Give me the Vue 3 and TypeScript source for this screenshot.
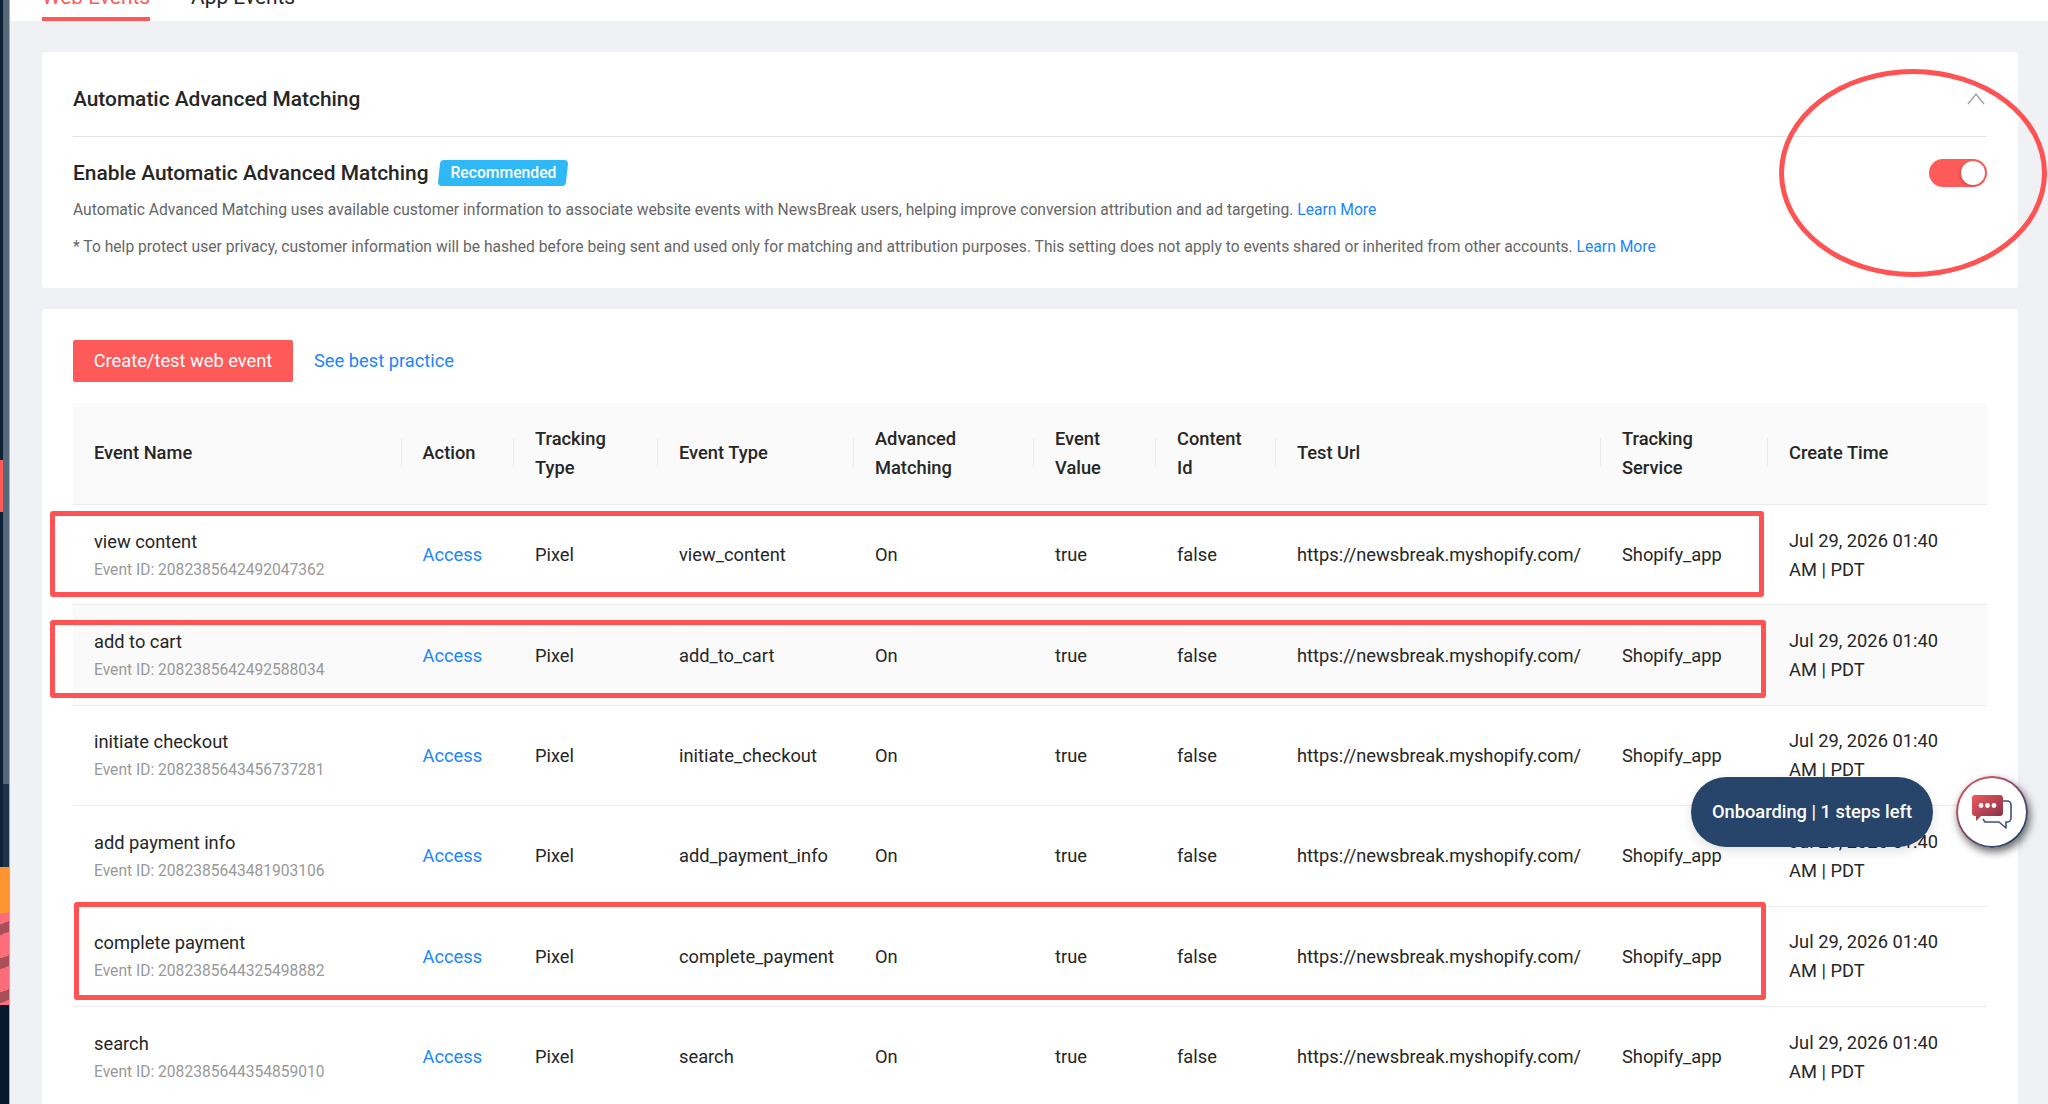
<script setup lang="ts">
interface EventRow {
  name: string;
  id: string;
  type: string;
}

// Rows of the web events table
const rows: EventRow[] = [
  { name: 'view content', id: '2082385642492047362', type: 'view_content' },
  { name: 'add to cart', id: '2082385642492588034', type: 'add_to_cart' },
  { name: 'initiate checkout', id: '2082385643456737281', type: 'initiate_checkout' },
  { name: 'add payment info', id: '2082385643481903106', type: 'add_payment_info' },
  { name: 'complete payment', id: '2082385644325498882', type: 'complete_payment' },
  { name: 'search', id: '2082385644354859010', type: 'search' },
];

const columns = [328.5, 112.5, 144, 196, 180, 122, 120, 325, 167, 219];
</script>

<template>
  <div class="page">
    <aside class="rail">
      <div class="rail-top"></div>
      <div class="rail-art"></div>
      <div class="rail-bottom"></div>
    </aside>

    <main class="main">
      <nav class="tabs">
        <span class="tab active">Web Events</span>
        <span class="tab">App Events</span>
      </nav>

      <div class="content">
        <section class="card matching">
          <header class="matching-head">
            <h2>Automatic Advanced Matching</h2>
            <svg class="chevron" width="18" height="13" viewBox="0 0 18 13">
              <path d="M1 12 L9 2 L17 12" fill="none" stroke="#a0a0a0" stroke-width="1.4" />
            </svg>
          </header>
          <div class="enable-row">
            <h3>Enable Automatic Advanced Matching</h3>
            <span class="badge">Recommended</span>
            <span class="toggle"><i></i></span>
          </div>
          <p class="desc first">
            Automatic Advanced Matching uses available customer information to associate website events with NewsBreak users, helping improve conversion attribution and ad targeting.
            <a>Learn More</a>
          </p>
          <p class="desc">
            * To help protect user privacy, customer information will be hashed before being sent and used only for matching and attribution purposes. This setting does not apply to events shared or inherited from other accounts.
            <a>Learn More</a>
          </p>
        </section>

        <section class="card events">
          <div class="actions">
            <button class="create">Create/test web event</button>
            <a class="practice">See best practice</a>
          </div>
          <table>
            <colgroup>
              <col v-for="(w, i) in columns" :key="i" :style="{ width: w + 'px' }" />
            </colgroup>
            <thead>
              <tr>
                <th>Event Name</th>
                <th>Action</th>
                <th>Tracking<br />Type</th>
                <th>Event Type</th>
                <th>Advanced<br />Matching</th>
                <th>Event<br />Value</th>
                <th>Content<br />Id</th>
                <th>Test Url</th>
                <th>Tracking<br />Service</th>
                <th>Create Time</th>
              </tr>
            </thead>
            <tbody>
              <tr v-for="(row, i) in rows" :key="row.id" :class="{ hovered: i === 1 }">
                <td>
                  <div class="name">{{ row.name }}</div>
                  <div class="event-id">Event ID: {{ row.id }}</div>
                </td>
                <td><a class="access">Access</a></td>
                <td>Pixel</td>
                <td>{{ row.type }}</td>
                <td>On</td>
                <td>true</td>
                <td>false</td>
                <td>https://newsbreak.myshopify.com/</td>
                <td>Shopify_app</td>
                <td class="time">Jul 29, 2026 01:40 AM | PDT</td>
              </tr>
            </tbody>
          </table>
        </section>
      </div>
    </main>

    <!-- red marks drawn over the screenshot -->
    <div class="mark mark-one"></div>
    <div class="mark mark-two"></div>
    <div class="mark mark-three"></div>
    <div class="mark-ring"></div>

    <div class="onboarding">Onboarding | 1 steps left</div>
    <div class="chat">
      <div class="chat-inner">
        <svg width="42" height="36" viewBox="0 0 42 36">
          <defs>
            <linearGradient id="bubble" x1="0" y1="0" x2="1" y2="1">
              <stop offset="0" stop-color="#f2595c" />
              <stop offset="1" stop-color="#7a2f4a" />
            </linearGradient>
          </defs>
          <path d="M31 7 h5 a4 4 0 0 1 4 4 v13 a4 4 0 0 1 -4 4 h-1 v6 l-7 -6 h-14 l-2 -3" fill="none" stroke="#444e78" stroke-width="1.6" stroke-linejoin="round" />
          <path d="M4 1 h25 a3 3 0 0 1 3 3 v15 a3 3 0 0 1 -3 3 h-19 l-5 5 v-5 h-1 a3 3 0 0 1 -3 -3 v-15 a3 3 0 0 1 3 -3 z" fill="url(#bubble)" />
          <circle cx="10" cy="11.500" r="2.400" fill="#fff" />
          <circle cx="16.500" cy="11.500" r="2.400" fill="#fff" />
          <circle cx="23" cy="11.500" r="2.400" fill="#fff" />
        </svg>
      </div>
    </div>
  </div>
</template>

<style>
html,
body {
  margin: 0;
  overflow: hidden;
}
</style>

<style scoped>
.page {
  position: relative;
  display: flex;
  height: 1104px;
  overflow: hidden;
  font-family: Roboto, "Liberation Sans", sans-serif;
  font-size: 18.3px;
  color: #262626;
  background: #f0f1f5;
}

/* left edge of the app behind the page */
.rail {
  flex: none;
  width: 10px;
  display: flex;
  flex-direction: column;
  border-right: 1px solid #a9adb5;
  box-sizing: border-box;
}
.rail-top {
  height: 867px;
  background:
    linear-gradient(#55697a, #55697a) 3px 0 / 6px 784px no-repeat,
    linear-gradient(#1d3348, #1d3348) 3px 0 / 6px 867px no-repeat,
    linear-gradient(#ff5a5a, #ff5a5a) 0 460px / 3px 52px no-repeat,
    #0f2238;
}
.rail-art {
  height: 138px;
  background:
    linear-gradient(172deg, #ff9430 0, #ff9430 33%, transparent 34%),
    repeating-linear-gradient(160deg, #fb6d78 0, #fb6d78 22px, #a84f58 22px, #a84f58 32px);
}
.rail-bottom {
  flex: 1;
  background: #08182c;
}

.main {
  flex: 1;
  min-width: 0;
}

.tabs {
  display: flex;
  gap: 41px;
  height: 21px;
  padding-left: 32px;
  background: #fff;
  overflow: hidden;
  align-items: flex-end;
}
.tab {
  flex: none;
  font-size: 20.9px;
  line-height: 24px;
  padding-bottom: 12px;
}
.tab.active {
  color: #ff5a5a;
  border-bottom: 4px solid #ff5a5a;
  padding-bottom: 8px;
}

.content {
  padding: 31px 30px 0 32px;
}

.card {
  background: #fff;
  border-radius: 3px;
  padding: 0 31px;
}
.matching {
  height: 236px;
  box-sizing: border-box;
  margin-bottom: 21px;
}
.matching-head {
  display: flex;
  align-items: center;
  justify-content: space-between;
  height: 84.5px;
  padding-top: 10px;
  border-bottom: 1px solid #e3e3e3;
  box-sizing: border-box;
}
.matching-head h2 {
  margin: 0;
  font-size: 20.9px;
  font-weight: 500;
}
.chevron {
  margin: 0 2px 0 0;
}
.enable-row {
  display: flex;
  align-items: center;
  gap: 11px;
  height: 28px;
  margin-top: 22.500px;
}
.enable-row h3 {
  margin: 0;
  font-size: 20.9px;
  font-weight: 500;
}
.badge {
  position: relative;
  z-index: 0;
  padding: 0 11px;
  font-size: 15.7px;
  font-weight: 500;
  line-height: 26px;
  color: #fff;
}
.badge::before {
  content: "";
  position: absolute;
  inset: 0;
  z-index: -1;
  background: #2fb8f6;
  border-radius: 4px;
  transform: skewX(-6deg);
}
.toggle {
  display: flex;
  justify-content: flex-end;
  align-items: center;
  width: 58px;
  height: 28px;
  margin-left: auto;
  padding: 2px;
  box-sizing: border-box;
  background: #ff5a5a;
  border-radius: 14px;
}
.toggle i {
  width: 24px;
  height: 24px;
  background: #fff;
  border-radius: 50%;
  box-shadow: -1px 1px 3px rgba(0, 0, 0, 0.2);
}
.desc {
  margin: 0;
  font-size: 15.65px;
  line-height: 24px;
  color: #666;
  margin-top: 13px;
}
.desc.first {
  margin-top: 11px;
}
.desc a {
  color: #1a86ff;
}

.events {
  padding-top: 31px;
  height: 900px;
  box-sizing: border-box;
}
.actions {
  display: flex;
  align-items: center;
  gap: 21px;
  margin-bottom: 21px;
}
.create {
  width: 220px;
  height: 42px;
  padding: 0 0 2px;
  border: none;
  border-radius: 2px;
  background: #ff5a5a;
  color: #fff;
  font: inherit;
}
.practice {
  margin-bottom: 2px;
  color: #1a86ff;
}

table {
  width: 1914px;
  table-layout: fixed;
  border-collapse: collapse;
}
th {
  position: relative;
  height: 99px;
  padding: 0 0 2px 21px;
  background: #fafafa;
  border-bottom: 1px solid #ececec;
  font-weight: 500;
  line-height: 29px;
  text-align: left;
}
th + th::before {
  content: "";
  position: absolute;
  left: -1px;
  top: 35px;
  height: 29px;
  width: 1px;
  background: #ececec;
}
td {
  height: 100.4px;
  padding: 0 0 0 21px;
  border-bottom: 1px solid #ececec;
  line-height: 29px;
  box-sizing: border-box;
}
tr.hovered td {
  background: #fafafa;
}
.name {
  margin-top: 1px;
}
.event-id {
  font-size: 15.6px;
  line-height: 28px;
  color: #999;
}
.access {
  color: #1a86ff;
}
td.time {
  padding-right: 36px;
}

/* annotations */
.mark {
  position: absolute;
  border: 5px solid #ff5252;
  border-radius: 3px;
  box-sizing: border-box;
}
.mark-one {
  left: 50px;
  top: 511px;
  width: 1714px;
  height: 86px;
}
.mark-two {
  left: 50px;
  top: 620px;
  width: 1716px;
  height: 78px;
}
.mark-three {
  left: 74px;
  top: 902px;
  width: 1692px;
  height: 98px;
}
.mark-ring {
  position: absolute;
  left: 1779px;
  top: 69px;
  width: 268px;
  height: 208px;
  border: 5px solid #ff5252;
  border-radius: 50%;
  box-sizing: border-box;
}

.onboarding {
  position: absolute;
  left: 1691px;
  top: 777px;
  width: 242px;
  height: 70px;
  border-radius: 35px;
  background: #27446a;
  color: #fff;
  font-weight: 500;
  line-height: 70px;
  text-align: center;
  box-shadow: 0 4px 12px rgba(0, 0, 0, 0.12);
}
.chat {
  position: absolute;
  left: 1956px;
  top: 776px;
  width: 72px;
  height: 72px;
  padding: 2px;
  box-sizing: border-box;
  border-radius: 50%;
  background: linear-gradient(140deg, #f0565c, #27446a 85%);
  box-shadow: 2px 4px 9px rgba(0, 0, 0, 0.6);
}
.chat-inner {
  display: flex;
  align-items: center;
  justify-content: center;
  height: 100%;
  border-radius: 50%;
  background: #fff;
}
</style>
